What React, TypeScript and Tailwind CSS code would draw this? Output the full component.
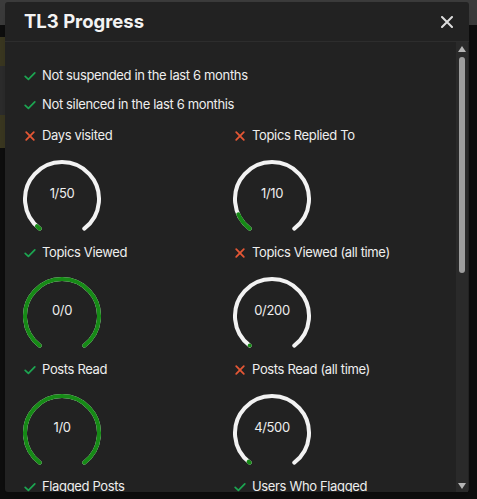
import { Fragment } from 'react'

type Req = { label: string; ok: boolean; value?: number; target?: number }

const FLAGS: Req[] = [
  { label: 'Not suspended in the last 6 months', ok: true },
  { label: 'Not silenced in the last 6 monthis', ok: true },
]

const GAUGES: Req[] = [
  { label: 'Days visited', ok: false, value: 1, target: 50 },
  { label: 'Topics Replied To', ok: false, value: 1, target: 10 },
  { label: 'Topics Viewed', ok: true, value: 0, target: 0 },
  { label: 'Topics Viewed (all time)', ok: false, value: 0, target: 200 },
  { label: 'Posts Read', ok: true, value: 1, target: 0 },
  { label: 'Posts Read (all time)', ok: false, value: 4, target: 500 },
  { label: 'Flagged Posts', ok: true },
  { label: 'Users Who Flagged', ok: true },
]

function Check() {
  return (
    <svg width="12" height="12" viewBox="0 0 12 12" className="shrink-0">
      <path d="M1.2 6.4 L4.4 9.4 L10.8 2.8" fill="none" stroke="#1ca551" strokeWidth="1.7" strokeLinecap="round" strokeLinejoin="round" />
    </svg>
  )
}

function Cross() {
  return (
    <svg width="12" height="12" viewBox="0 0 12 12" className="shrink-0">
      <path d="M2.2 2.2 L9.8 9.8 M9.8 2.2 L2.2 9.8" fill="none" stroke="#e45735" strokeWidth="1.8" strokeLinecap="round" />
    </svg>
  )
}

function Label({ ok, text }: { ok: boolean; text: string }) {
  return (
    <div className="flex items-center gap-[6px] h-5 text-[13px] tracking-[-0.35px] text-[#eeeeee] whitespace-nowrap">
      {ok ? <Check /> : <Cross />}
      <span>{text}</span>
    </div>
  )
}

// arc with a gap at the bottom, 37deg each side of straight down
const CX = 40
const CY = 40
const R = 37
const pt = (deg: number) => {
  const a = (deg * Math.PI) / 180
  return `${(CX + R * Math.sin(a)).toFixed(2)} ${(CY - R * Math.cos(a)).toFixed(2)}`
}
const ARC = `M ${pt(217)} A ${R} ${R} 0 1 1 ${pt(503)}`

function Gauge({ value, target }: { value: number; target: number }) {
  const frac = target === 0 ? 1 : Math.min(value / target, 1)
  return (
    <div className="relative w-[80px] h-[80px] -ml-[2px]">
      <svg width="80" height="80" viewBox="0 0 80 80">
        <path d={ARC} fill="none" stroke="#f2f2f2" strokeWidth="4" strokeLinecap="round" />
        <path
          d={ARC}
          fill="none"
          stroke="#168a16"
          strokeWidth="4"
          strokeLinecap="round"
          pathLength={100}
          strokeDasharray={`${frac * 100} 200`}
        />
      </svg>
      <div className="absolute inset-x-0 top-[25px] text-center text-[13px] tracking-[-0.35px] text-[#eeeeee]">
        {value}/{target}
      </div>
    </div>
  )
}

export default function App() {
  return (
    <div className="relative w-[477px] h-[499px] overflow-hidden bg-[#0e0e0e]" style={{ fontFamily: 'Inter, "Noto Sans", sans-serif' }}>
      {/* page behind the modal */}
      <div className="h-[25px] bg-[#3b3b3b]" />
      <div className="flex flex-col gap-0 mt-[12px] w-[5px]">
        <div className="h-[29px] bg-[#3a3720]" />
        <div className="h-[49px] bg-[#2c2c2c]" />
        <div className="h-[33px] bg-[#3a3720]" />
      </div>

      {/* modal */}
      <div className="absolute left-[5px] top-[2px] w-[464px] h-[490px] bg-[#222222] rounded-[3px] flex flex-col shadow-lg">
        <div className="h-[40px] shrink-0 flex items-center justify-between pl-[19px] pr-[16px] border-b border-[#2d2d2d]">
          <h2 className="text-[18.5px] font-bold text-[#f3f3f3]">TL3 Progress</h2>
          <svg width="12" height="12" viewBox="0 0 12 12">
            <path d="M1 1 L11 11 M11 1 L1 11" stroke="#dddddd" strokeWidth="2" strokeLinecap="round" />
          </svg>
        </div>

        <div className="flex-1 flex min-h-0">
          <div className="flex-1 overflow-hidden pl-[19px] pt-[24px]">
            <div className="flex flex-col gap-[9px]">
              {FLAGS.map(f => (
                <Label key={f.label} ok={f.ok} text={f.label} />
              ))}
            </div>
            <div className="grid grid-cols-[210px_210px] mt-[11px]">
              {GAUGES.map(g => (
                <Fragment key={g.label}>
                  <div className="h-[117px] flex flex-col">
                    <Label ok={g.ok} text={g.label} />
                    {g.value !== undefined && (
                      <div className="mt-[13px]">
                        <Gauge value={g.value} target={g.target ?? 0} />
                      </div>
                    )}
                  </div>
                </Fragment>
              ))}
            </div>
          </div>

          {/* scrollbar */}
          <div className="w-[12px] mr-[1px] bg-[#2a2a2a] flex flex-col items-center pt-[4px] pb-[3px]">
            <svg width="8" height="6" viewBox="0 0 8 6"><path d="M4 0 L8 6 L0 6 Z" fill="#b5b5b5" /></svg>
            <div className="w-[6px] h-[216px] mt-[5px] rounded-full bg-[#9e9e9e]" />
            <div className="flex-1" />
            <svg width="8" height="6" viewBox="0 0 8 6"><path d="M0 0 L8 0 L4 6 Z" fill="#b5b5b5" /></svg>
          </div>
        </div>
      </div>
    </div>
  )
}
